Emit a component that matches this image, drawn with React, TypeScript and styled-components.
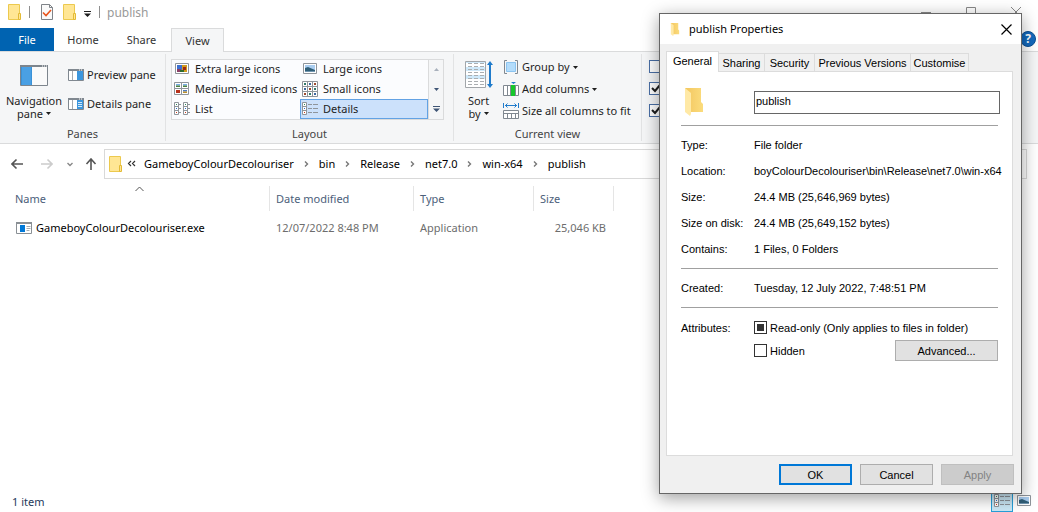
import React from "react";
import styled, { createGlobalStyle } from "styled-components";

const GlobalStyle = createGlobalStyle`
  *, *::before, *::after { box-sizing: border-box; }
  html, body { margin: 0; padding: 0; background: #fff; overflow: hidden; }
  body, button, input, table {
    font-family: "Segoe UI", "Noto Sans", sans-serif;
    font-size: 11px;
    line-height: 16px;
    color: #1e1e1e;
  }
  button { border: 0; padding: 0; margin: 0; background: none; }
  a { color: inherit; text-decoration: none; }
`;

const Explorer = styled.div`
  position: relative;
  display: flex;
  flex-direction: column;
  min-height: 100vh;
  background: #fff;
`;

const TitleBar = styled.header`
  display: flex;
  align-items: flex-start;
  height: 28px;
  padding: 4px 17px 0 8px;
`;

const QuickAccess = styled.div`
  display: flex;
  align-items: flex-start;
  flex: 1;
`;

const QuickButton = styled.button<{ $space: number }>`
  display: block;
  margin-right: ${(p) => p.$space}px;
  svg { display: block; }
`;

const QuickDivider = styled.span<{ $space: number }>`
  width: 1px;
  height: 12px;
  margin: 2px ${(p) => p.$space}px 0 0;
  background: #8f8f8f;
`;

const WindowTitle = styled.span`
  line-height: 18px;
  font-size: 12px;
  color: #999;
`;

const WindowButtons = styled.div`
  display: flex;
  gap: 35px;
  padding-top: 3px;
  svg { display: block; }
`;

const TabStrip = styled.nav`
  display: flex;
  align-items: flex-end;
  height: 24px;
  border-bottom: 1px solid #dadbdc;
`;

const RibbonTab = styled.button<{ $kind?: "file" | "active"; $width: number }>`
  width: ${(p) => p.$width}px;
  height: ${(p) => (p.$kind === "active" ? 24 : 23)}px;
  margin-bottom: ${(p) => (p.$kind === "active" ? -1 : 0)}px;
  color: ${(p) => (p.$kind === "file" ? "#fff" : "#333")};
  background: ${(p) => (p.$kind === "file" ? "#0063b1" : p.$kind === "active" ? "#f5f6f7" : "transparent")};
  border: ${(p) => (p.$kind === "active" ? "1px solid #dadbdc" : "0")};
  border-bottom: 0;
`;

const HelpButton = styled.button`
  width: 16px;
  height: 16px;
  margin: 0 2px 4px auto;
  border-radius: 50%;
  border: 1px solid #0a4f94;
  background: #1469bd;
  color: #fff;
  font-size: 12px;
  font-weight: 700;
  line-height: 14px;
`;

const Ribbon = styled.section`
  display: flex;
  height: 92px;
  padding: 2px 0;
  background: #f5f6f7;
  border-bottom: 1px solid #dadbdc;
`;

const Group = styled.div<{ $width: number }>`
  display: flex;
  flex-direction: column;
  justify-content: space-between;
  width: ${(p) => p.$width}px;
  height: 87px;
  flex: none;
  border-right: 1px solid #e2e3e4;
`;

const GroupBody = styled.div`
  display: flex;
  flex: 1;
`;

const GroupLabel = styled.div`
  height: 16px;
  line-height: 18px;
  text-align: center;
  color: #444;
`;

const LargeButton = styled.button<{ $width: number }>`
  display: flex;
  flex-direction: column;
  align-items: center;
  width: ${(p) => p.$width}px;
  padding-top: 7px;
  svg { display: block; flex: none; }
`;

const LargeIcon = styled.span`
  display: flex;
  align-items: center;
  height: 33px;
  padding-bottom: 5px;
`;

const LargeText = styled.span`
  display: flex;
  align-items: center;
  gap: 3px;
  height: 13px;
  line-height: 13px;
`;

const Stack = styled.div<{ $gap: number; $top: number }>`
  display: flex;
  flex-direction: column;
  gap: ${(p) => p.$gap}px;
  padding-top: ${(p) => p.$top}px;
`;

const SmallButton = styled.button`
  display: flex;
  align-items: center;
  gap: 3px;
  height: 16px;
  white-space: nowrap;
  svg { flex: none; }
`;

const Gallery = styled.div`
  display: flex;
  width: 273px;
  height: 61px;
  margin: 5px 0 0 5px;
  border: 1px solid #dadbdc;
  background: #fbfcfe;
`;

const GalleryGrid = styled.div`
  display: grid;
  grid-template-columns: 128px 128px;
  grid-template-rows: 20px 20px 20px;
  flex: 1;
  margin-top: -1px;
`;

const GalleryItem = styled.button<{ $selected?: boolean }>`
  display: flex;
  align-items: center;
  gap: 5px;
  padding: 0 0 0 1px;
  white-space: nowrap;
  border: 1px solid ${(p) => (p.$selected ? "#62a2e4" : "transparent")};
  background: ${(p) => (p.$selected ? "#cce1fb" : "transparent")};
  svg { flex: none; }
`;

const GalleryScroll = styled.div`
  display: grid;
  grid-template-rows: 20px 20px 20px;
  width: 15px;
  border-left: 1px solid #dadbdc;
  background: #f5f6f7;
`;

const ScrollButton = styled.button`
  display: grid;
  place-items: center;
  padding-bottom: 2px;
`;

const ShowOptions = styled.div`
  display: flex;
  flex-direction: column;
  gap: 9px;
  padding: 6px 0 0 7px;
`;

const RibbonCheck = styled.input`
  appearance: none;
  display: block;
  width: 13px;
  height: 13px;
  margin: 0;
  border: 1px solid #4a6fa5;
  background: #fff;
  &:checked {
    background: #fff url("data:image/svg+xml,%3Csvg xmlns='http://www.w3.org/2000/svg' viewBox='0 0 11 11'%3E%3Cpath d='M2 5l3 3 5-6' fill='none' stroke='%231e1e1e' stroke-width='2'/%3E%3C/svg%3E");
  }
`;

const AddressRow = styled.nav`
  display: flex;
  align-items: center;
  height: 42px;
  padding: 0 11px 2px 11px;
`;

const NavButton = styled.button<{ $space: number }>`
  margin-right: ${(p) => p.$space}px;
  svg { display: block; }
`;

const AddressBox = styled.div`
  display: flex;
  align-items: center;
  flex: 1;
  height: 30px;
  padding-left: 4px;
  border: 1px solid #d9d9d9;
  color: #000;
  white-space: nowrap;
`;

const Crumbs = styled.div`
  display: flex;
  align-items: center;
  gap: 10px;
`;

const FileArea = styled.main`
  flex: 1;
`;

const FileTable = styled.table`
  table-layout: fixed;
  width: 614px;
  border-collapse: separate;
  border-spacing: 0;
`;

const HeadCell = styled.th<{ $width: number; $first?: boolean }>`
  width: ${(p) => p.$width}px;
  height: 25px;
  padding: 0 0 0 ${(p) => (p.$first ? 15 : 6)}px;
  border-right: 1px solid #e5e5e5;
  text-align: left;
  font-weight: 400;
  color: #4c607a;
`;

const HeadInner = styled.div`
  position: relative;
`;

const SortMark = styled.svg`
  position: absolute;
  left: 120px;
  top: -5px;
`;

const Cell = styled.td<{ $first?: boolean; $right?: boolean }>`
  height: 34px;
  padding: 0 ${(p) => (p.$right ? 8 : 0)}px 0 ${(p) => (p.$first ? 16 : 6)}px;
  text-align: ${(p) => (p.$right ? "right" : "left")};
  color: ${(p) => (p.$first ? "#000" : "#6d6d6d")};
  white-space: nowrap;
`;

const FileName = styled.span`
  display: flex;
  align-items: center;
  gap: 4px;
`;

const StatusBar = styled.footer`
  display: flex;
  align-items: center;
  height: 22px;
  padding: 0 3px 0 12px;
  color: #1e395b;
`;

const StatusCount = styled.span`
  flex: 1;
  padding-top: 2px;
`;

const ViewToggle = styled.button<{ $active?: boolean }>`
  display: grid;
  place-items: center;
  width: 22px;
  height: 22px;
  border: ${(p) => (p.$active ? "1px solid #26a0da" : "0")};
  background: ${(p) => (p.$active ? "#cbe8f6" : "transparent")};
`;

const Dialog = styled.section`
  position: absolute;
  top: 13px;
  right: 16px;
  width: 363px;
  padding-bottom: 8px;
  border: 1px solid #666;
  background: #f0f0f0;
  box-shadow: 0 4px 16px rgba(0, 0, 0, 0.38);
  &, & button, & input {
    font-family: "Liberation Sans", sans-serif;
    font-size: 11px;
    color: #000;
  }
`;

const DialogTitle = styled.div`
  display: flex;
  align-items: center;
  height: 30px;
  padding: 0 9px 0 10px;
  background: #fff;
  svg { display: block; }
`;

const DialogName = styled.h2`
  flex: 1;
  margin: 0 0 0 9px;
  font-family: "Segoe UI", "Noto Sans", sans-serif;
  font-size: 11px;
  font-weight: 400;
`;

const DialogTabs = styled.div`
  display: flex;
  align-items: flex-end;
  height: 27px;
  padding-left: 6px;
`;

const DialogTab = styled.button<{ $active?: boolean; $width: number }>`
  position: relative;
  width: ${(p) => p.$width}px;
  height: ${(p) => (p.$active ? 21 : 18)}px;
  margin-bottom: ${(p) => (p.$active ? -1 : 0)}px;
  padding-bottom: ${(p) => (p.$active ? 2 : 0)}px;
  border: 1px solid #dcdcdc;
  border-bottom: 0;
  border-left-width: ${(p) => (p.$active ? 1 : 0)}px;
  background: ${(p) => (p.$active ? "#fff" : "#f0f0f0")};
`;

const Panel = styled.div`
  height: 385px;
  margin: 0 8px 0 6px;
  padding: 16px 14px 0 14px;
  border: 1px solid #dcdcdc;
  background: #fff;
`;

const NameRow = styled.div`
  display: flex;
  height: 37px;
  padding-left: 4px;
`;

const NameInput = styled.input`
  flex: 1;
  height: 23px;
  margin: 3px -2px 0 51px;
  padding: 0 1px 3px 1px;
  border: 1px solid #666;
  outline: 0;
`;

const Rule = styled.hr`
  height: 1px;
  margin: 0;
  border: 0;
  background: #a0a0a0;
`;

const Details = styled.dl`
  display: grid;
  grid-template-columns: 73px 1fr;
  grid-auto-rows: 26px;
  align-items: center;
  margin: 0;
  padding: 6px 0;
  white-space: nowrap;
  dt, dd { margin: 0; }
`;

const Attributes = styled.fieldset`
  display: grid;
  grid-template-columns: 73px 1fr auto;
  grid-auto-rows: 23px;
  align-items: center;
  margin: 0;
  padding: 8px 0 0 0;
  border: 0;
`;

const WideCheck = styled.div`
  grid-column: 2 / 4;
`;

const CheckLabel = styled.label`
  display: flex;
  align-items: center;
  gap: 3px;
  white-space: nowrap;
`;

const DialogCheck = styled.input`
  appearance: none;
  width: 13px;
  height: 13px;
  margin: 0;
  border: 1px solid #333;
  background: #fff;
  &:checked { background: #333; box-shadow: inset 0 0 0 2px #fff; }
`;

const DialogButton = styled.button<{ $wide?: boolean; $kind?: "default" | "disabled" }>`
  display: block;
  width: ${(p) => (p.$wide ? 103 : 73)}px;
  height: 21px;
  border: ${(p) => (p.$kind === "default" ? "2px solid #0078d7" : p.$kind === "disabled" ? "1px solid #bfbfbf" : "1px solid #adadad")};
  background: ${(p) => (p.$kind === "disabled" ? "#ccc" : "#e1e1e1")};
  && { color: ${(p) => (p.$kind === "disabled" ? "#838383" : "#000")}; }
`;

const Advanced = styled.div`
  grid-column: 3;
`;

const DialogActions = styled.div`
  display: flex;
  justify-content: flex-end;
  gap: 8px;
  padding: 8px 7px 0 0;
`;

const FolderIcon = () => (
  <svg width="14" height="17" viewBox="0 0 14 17" aria-hidden="true">
    <path d="M.5.5h11v15H.5z" fill="#ffe694" stroke="#ecc94e" />
    <path d="M10.500 9.500h2v6h-2z" fill="#ffe694" stroke="#e3ba35" />
  </svg>
);

const OpenFolder = ({ w, h }: { w: number; h: number }) => (
  <svg width={w} height={h} viewBox="0 0 18 28" aria-hidden="true">
    <defs>
      <linearGradient id="folderBack" x1="0" x2="1">
        <stop offset="0" stopColor="#f3c65f" />
        <stop offset="1" stopColor="#fbdc7d" />
      </linearGradient>
    </defs>
    <path d="M0 0h16v14l2 2v8H5z" fill="url(#folderBack)" />
    <path d="M0 0l6 5v21l-1 2-5-4z" fill="#ffe9a6" />
  </svg>
);

const CheckedPage = () => (
  <svg width="12" height="16" viewBox="0 0 12 16" aria-hidden="true">
    <path d="M.5.5h8l3 3v12H.5z" fill="#fafafa" stroke="#7f8388" />
    <path d="M8.500.5v3h3" fill="none" stroke="#7f8388" />
    <path d="M2 8.500l3 3 5-5.500" fill="none" stroke="#e8541c" strokeWidth="1.600" />
  </svg>
);

const Caret = ({ color = "#1e1e1e" }: { color?: string }) => (
  <svg width="5" height="3" viewBox="0 0 5 3" aria-hidden="true">
    <path d="M0 0h5L2.500 3z" fill={color} />
  </svg>
);

const Customize = ({ color = "#1e1e1e" }: { color?: string }) => (
  <svg width="7" height="6" viewBox="0 0 7 6" aria-hidden="true">
    <path d="M0 0h7v1H0zM0 2.500h7L3.500 6z" fill={color} />
  </svg>
);

const PaneWindow = ({ kind }: { kind: "preview" | "details" }) => (
  <svg width="16" height="12" viewBox="0 0 16 12" aria-hidden="true">
    <path d="M.5.5h15v11H.5z" fill="#fff" stroke="#808890" />
    <path d="M0 0h16v2H0z" fill="#808890" />
    <path d="M11 .5h1v1h-1zM13 .5h1v1h-1z" fill="#fff" />
    <path d="M4.500 2v9" stroke="#a5abb1" />
    <path d="M9 2h6v9H9z" fill="#3c96dd" />
    {kind === "details" && <path d="M10 4.500h4M10 6.500h4M10 8.500h4" stroke="#d5eaf9" />}
  </svg>
);

const NavPane = () => (
  <svg width="28" height="21" viewBox="0 0 28 21" aria-hidden="true">
    <path d="M.5.5h27v20H.5z" fill="#fafafa" stroke="#7d858d" />
    <path d="M0 0h28v2H0z" fill="#7d858d" />
    <path d="M22 .5h1v1h-1zM24 .5h1v1h-1zM26 .5h1v1h-1z" fill="#fff" />
    <path d="M1 2h11v18H1z" fill="#4aa0e4" />
    <path d="M1.500 2v18M11.500 2v18" stroke="#3a92d8" />
  </svg>
);

const Picture = ({ flowers }: { flowers?: boolean }) => (
  <svg width="16" height="16" viewBox="0 0 16 16" aria-hidden="true">
    <path d="M1.500 2.500h13v10h-13z" fill="#fff" stroke="#8f959b" />
    {flowers ? (
      <>
        <path d="M3 4h10v7H3z" fill="#3c6fd0" />
        <path d="M3 8h4v3H3z" fill="#8a3f66" />
        <path d="M8 4h5v7H8z" fill="#d19a1d" />
        <path d="M9 6h3v3H9z" fill="#9c2a16" />
        <path d="M6 9h4v2H6z" fill="#2f6b2f" />
      </>
    ) : (
      <>
        <path d="M3 4h10v7H3z" fill="#a9cdf0" />
        <path d="M3 7l3-1 7 3v2H3z" fill="#305f78" />
        <path d="M3 10h10v1H3z" fill="#7196b0" />
      </>
    )}
  </svg>
);

const MediumIcons = () => (
  <svg width="16" height="16" viewBox="0 0 16 16" aria-hidden="true">
    <path d="M.5 1.500h7v6h-7zM7.500 1.500h7v6h-7zM.5 7.500h7v6h-7zM7.500 7.500h7v6h-7z" fill="#fff" stroke="#8f959b" />
    <path d="M2 3h4v1.500H2zM9 3h4v1.500H9z" fill="#78aee6" />
    <path d="M2 4.500h4V6H2zM9 4.500h4V6H9z" fill="#4c8240" />
    <path d="M2 9h4v3H2z" fill="#b8331d" />
    <path d="M9 9h4v1.500H9z" fill="#4d7bc0" />
    <path d="M9 10.500h4V12H9z" fill="#bb902d" />
  </svg>
);

const SmallIcons = () => (
  <svg width="16" height="16" viewBox="0 0 16 16" aria-hidden="true">
    <path d="M.5.5h15v15H.5zM5.500.5v15M10.500.5v15M.5 5.500h15M.5 10.500h15" fill="#fff" stroke="#8f959b" />
    <path d="M2 2h2v2H2zM12 7h2v2h-2zM7 12h2v2H7z" fill="#327a6b" />
    <path d="M7 2h2v2H7zM2 7h2v2H2zM12 12h2v2h-2z" fill="#3c68a0" />
    <path d="M12 2h2v2h-2zM7 7h2v2H7zM2 12h2v2H2z" fill="#9c4a2f" />
  </svg>
);

const ListIcon = ({ details }: { details?: boolean }) => (
  <svg width="16" height="16" viewBox="0 0 16 16" aria-hidden="true">
    <path d="M.5 1.500h4v12h-4zM.5 5.500h4M.5 9.500h4" fill="#fff" stroke="#8f959b" />
    {!details && <path d="M9.500 1.500h4v12h-4zM9.500 5.500h4M9.500 9.500h4" fill="#fff" stroke="#8f959b" />}
    <path d="M2 3h1v1H2z" fill="#2f8a5c" />
    <path d="M2 7h1v1H2z" fill="#2b6fd0" />
    <path d="M2 11h1v1H2z" fill="#d03a1a" />
    {details ? (
      <path d="M6 3.500h4M11 3.500h5M6 7.500h4M11 7.500h5M6 11.500h4M11 11.500h5" stroke="#8f959b" />
    ) : (
      <>
        <path d="M5 3.500h2M5 7.500h2M5 11.500h2M14 3.500h2M14 7.500h2M14 11.500h2" stroke="#8f959b" />
        <path d="M11 3h1v1h-1z" fill="#2f8a5c" />
        <path d="M11 7h1v1h-1z" fill="#2b6fd0" />
        <path d="M11 11h1v1h-1z" fill="#d03a1a" />
      </>
    )}
  </svg>
);

const SortIcon = () => (
  <svg width="28" height="28" viewBox="0 0 28 28" aria-hidden="true">
    <path d="M.5.5h20v26H.5z" fill="#fff" stroke="#a2a6aa" />
    <path d="M1 6h19v4H1zM1 14h19v4H1zM1 1h19v1H1z" fill="#cfe9fa" />
    <path d="M3 2.500h16M3 5.500h16M3 8.500h16M3 11.500h16M3 14.500h16M3 17.500h16M3 20.500h16M3 23.500h16" stroke="#aaaeb1" strokeDasharray="4 2" />
    <path d="M25 3v21" stroke="#1f7bcb" strokeWidth="2" />
    <path d="M22 4l3-4 3 4zM22 23l3 4 3-4z" fill="#1f7bcb" />
  </svg>
);

const GroupByIcon = () => (
  <svg width="16" height="16" viewBox="0 0 16 16" aria-hidden="true">
    <path d="M4 1.500H1.500v13H4M12 1.500h2.500v13H12" fill="none" stroke="#808890" />
    <path d="M3.500 3.500h9v9h-9z" fill="#b3dcfb" stroke="#8cc4f0" />
  </svg>
);

const AddColumnsIcon = () => (
  <svg width="16" height="16" viewBox="0 0 16 16" aria-hidden="true">
    <path d="M.5 4.500h15v10H.5zM4.500 4.500v10M7.500 4.500v10M12.500 4.500v10" fill="#fff" stroke="#808890" />
    <path d="M8 4h4v11H8z" fill="#16c62b" />
    <path d="M8 1h5l-2.500 2z" fill="#1f7bcb" />
  </svg>
);

const SizeColumnsIcon = () => (
  <svg width="16" height="16" viewBox="0 0 16 16" aria-hidden="true">
    <path d="M.5 0v5M15.500 0v5M2 2.500h12M4.500.5l-2 2 2 2M11.500.5l2 2-2 2" fill="none" stroke="#1f7bcb" />
    <path d="M.5 7.500h15v8H.5zM.5 10.500h15M4.500 10v5M8.500 10v5M12.500 10v5" fill="#fff" stroke="#808890" />
  </svg>
);

const AppIcon = () => (
  <svg width="16" height="12" viewBox="0 0 16 12" aria-hidden="true">
    <path d="M.5.5h15v11H.5z" fill="#fff" stroke="#8a9095" />
    <path d="M0 0h16v2H0z" fill="#8a9095" />
    <path d="M4 3h5v7H4z" fill="#0078d7" />
    <path d="M10.500 4.500h4M10.500 6.500h4M10.500 8.500h3" stroke="#a5abb1" />
  </svg>
);

const Arrow = ({ dir, color }: { dir: "left" | "right" | "up"; color: string }) => (
  <svg width="12" height="12" viewBox="0 0 12 12" aria-hidden="true" fill="none" stroke={color} strokeWidth="1.600">
    {dir === "left" && <path d="M12 6H1M5.500 1.500L1 6l4.500 4.500" />}
    {dir === "right" && <path d="M0 6h11M6.500 1.500L11 6l-4.500 4.500" />}
    {dir === "up" && <path d="M6 12V1M1.500 6L6 1l4.500 5" />}
  </svg>
);

const Chevron = () => (
  <svg width="5" height="6" viewBox="0 0 5 6" aria-hidden="true">
    <path d="M1 .5L3.500 3 1 5.500" fill="none" stroke="#777" strokeWidth="1.400" />
  </svg>
);

const crumbs = ["GameboyColourDecolouriser", "bin", "Release", "net7.0", "win-x64", "publish"];

const facts = [
  ["Type:", "File folder"],
  ["Location:", "boyColourDecolouriser\\bin\\Release\\net7.0\\win-x64"],
  ["Size:", "24.4 MB (25,646,969 bytes)"],
  ["Size on disk:", "24.4 MB (25,649,152 bytes)"],
  ["Contains:", "1 Files, 0 Folders"],
];

export default function App() {
  return (
    <Explorer>
      <GlobalStyle />
      <TitleBar>
        <QuickAccess>
          <QuickButton $space={7} aria-label="Folder"><FolderIcon /></QuickButton>
          <QuickDivider $space={11} />
          <QuickButton $space={10} aria-label="Properties"><CheckedPage /></QuickButton>
          <QuickButton $space={7} aria-label="New folder"><FolderIcon /></QuickButton>
          <QuickButton $space={8} aria-label="Customise toolbar">
            <svg width="7" height="13" viewBox="0 0 7 13"><path d="M0 7h7v1H0zM0 9.500h7L3.500 13z" fill="#1e1e1e" /></svg>
          </QuickButton>
          <QuickDivider $space={7} />
          <WindowTitle>publish</WindowTitle>
        </QuickAccess>
        <WindowButtons>
          <button aria-label="Minimise"><svg width="10" height="10"><path d="M0 5.500h10" stroke="#888" /></svg></button>
          <button aria-label="Maximise"><svg width="10" height="10"><path d="M.5.5h9v9h-9z" fill="none" stroke="#888" /></svg></button>
          <button aria-label="Close"><svg width="10" height="10"><path d="M0 0l10 10M10 0L0 10" stroke="#888" /></svg></button>
        </WindowButtons>
      </TitleBar>
      <TabStrip>
        <RibbonTab $kind="file" $width={54}>File</RibbonTab>
        <RibbonTab $width={58}>Home</RibbonTab>
        <RibbonTab $width={59}>Share</RibbonTab>
        <RibbonTab $kind="active" $width={53}>View</RibbonTab>
        <HelpButton aria-label="Help">?</HelpButton>
      </TabStrip>
      <Ribbon>
        <Group $width={166}>
          <GroupBody>
            <LargeButton $width={68}>
              <LargeIcon><NavPane /></LargeIcon>
              <LargeText>Navigation</LargeText>
              <LargeText>pane <Caret /></LargeText>
            </LargeButton>
            <Stack $gap={13} $top={13}>
              <SmallButton><PaneWindow kind="preview" />Preview pane</SmallButton>
              <SmallButton><PaneWindow kind="details" />Details pane</SmallButton>
            </Stack>
          </GroupBody>
          <GroupLabel>Panes</GroupLabel>
        </Group>
        <Group $width={288}>
          <GroupBody>
            <Gallery>
              <GalleryGrid>
                <GalleryItem><Picture flowers />Extra large icons</GalleryItem>
                <GalleryItem><Picture />Large icons</GalleryItem>
                <GalleryItem><MediumIcons />Medium-sized icons</GalleryItem>
                <GalleryItem><SmallIcons />Small icons</GalleryItem>
                <GalleryItem><ListIcon />List</GalleryItem>
                <GalleryItem $selected><ListIcon details />Details</GalleryItem>
              </GalleryGrid>
              <GalleryScroll>
                <ScrollButton aria-label="Scroll up">
                  <svg width="5" height="3"><path d="M0 3h5L2.500 0z" fill="#a9b1bc" /></svg>
                </ScrollButton>
                <ScrollButton aria-label="Scroll down"><Caret color="#3f5575" /></ScrollButton>
                <ScrollButton aria-label="More layouts"><Customize color="#3f5575" /></ScrollButton>
              </GalleryScroll>
            </Gallery>
          </GroupBody>
          <GroupLabel>Layout</GroupLabel>
        </Group>
        <Group $width={188}>
          <GroupBody>
            <LargeButton $width={49}>
              <LargeIcon><SortIcon /></LargeIcon>
              <LargeText>Sort</LargeText>
              <LargeText>by <Caret /></LargeText>
            </LargeButton>
            <Stack $gap={6} $top={5}>
              <SmallButton><GroupByIcon />Group by <Caret /></SmallButton>
              <SmallButton><AddColumnsIcon />Add columns <Caret /></SmallButton>
              <SmallButton><SizeColumnsIcon />Size all columns to fit</SmallButton>
            </Stack>
          </GroupBody>
          <GroupLabel>Current view</GroupLabel>
        </Group>
        <ShowOptions>
          <RibbonCheck type="checkbox" aria-label="Item check boxes" />
          <RibbonCheck type="checkbox" defaultChecked aria-label="File name extensions" />
          <RibbonCheck type="checkbox" defaultChecked aria-label="Hidden items" />
        </ShowOptions>
      </Ribbon>
      <AddressRow>
        <NavButton $space={18} aria-label="Back"><Arrow dir="left" color="#555" /></NavButton>
        <NavButton $space={14} aria-label="Forward"><Arrow dir="right" color="#ccc" /></NavButton>
        <NavButton $space={12} aria-label="Recent locations">
          <svg width="6" height="5"><path d="M.5 1L3 3.500 5.500 1" fill="none" stroke="#888" strokeWidth="1.400" /></svg>
        </NavButton>
        <NavButton $space={7} aria-label="Up"><Arrow dir="up" color="#555" /></NavButton>
        <AddressBox>
          <FolderIcon />
          <svg width="21" height="8" viewBox="0 0 21 8" aria-hidden="true">
            <path d="M8 1L5.500 3.500 8 6M12 1L9.500 3.500 12 6" fill="none" stroke="#333" strokeWidth="1.200" />
          </svg>
          <Crumbs>
            {crumbs.map((c, i) => (
              <React.Fragment key={c}>
                {i > 0 && <Chevron />}
                <a href="#">{c}</a>
              </React.Fragment>
            ))}
          </Crumbs>
        </AddressBox>
      </AddressRow>
      <FileArea>
        <FileTable>
          <thead>
            <tr>
              <HeadCell $width={270} $first>
                <HeadInner>
                  Name
                  <SortMark width="9" height="6" aria-hidden="true">
                    <path d="M.5 5L4.500 1l4 4" fill="none" stroke="#555" />
                  </SortMark>
                </HeadInner>
              </HeadCell>
              <HeadCell $width={144}>Date modified</HeadCell>
              <HeadCell $width={120}>Type</HeadCell>
              <HeadCell $width={80}>Size</HeadCell>
            </tr>
          </thead>
          <tbody>
            <tr>
              <Cell $first><FileName><AppIcon />GameboyColourDecolouriser.exe</FileName></Cell>
              <Cell>12/07/2022 8:48 PM</Cell>
              <Cell>Application</Cell>
              <Cell $right>25,046 KB</Cell>
            </tr>
          </tbody>
        </FileTable>
      </FileArea>
      <StatusBar>
        <StatusCount>1 item</StatusCount>
        <ViewToggle $active aria-label="Details view"><ListIcon details /></ViewToggle>
        <ViewToggle aria-label="Thumbnail view"><Picture /></ViewToggle>
      </StatusBar>

      <Dialog role="dialog" aria-labelledby="dialog-title">
        <DialogTitle>
          <OpenFolder w={10} h={13} />
          <DialogName id="dialog-title">publish Properties</DialogName>
          <button aria-label="Close dialog"><svg width="11" height="11"><path d="M.5.5l10 10M10.500.5l-10 10" stroke="#000" strokeWidth="1.200" /></svg></button>
        </DialogTitle>
        <DialogTabs>
          <DialogTab $active $width={53}>General</DialogTab>
          <DialogTab $width={46}>Sharing</DialogTab>
          <DialogTab $width={50}>Security</DialogTab>
          <DialogTab $width={96}>Previous Versions</DialogTab>
          <DialogTab $width={58}>Customise</DialogTab>
        </DialogTabs>
        <Panel>
          <NameRow>
            <OpenFolder w={18} h={28} />
            <NameInput aria-label="Folder name" defaultValue="publish" />
          </NameRow>
          <Rule />
          <Details>
            {facts.map(([k, v]) => (
              <React.Fragment key={k}>
                <dt>{k}</dt>
                <dd>{v}</dd>
              </React.Fragment>
            ))}
          </Details>
          <Rule />
          <Details>
            <dt>Created:</dt>
            <dd>Tuesday, 12 July 2022, 7:48:51 PM</dd>
          </Details>
          <Rule />
          <Attributes>
            <span>Attributes:</span>
            <WideCheck>
              <CheckLabel><DialogCheck type="checkbox" defaultChecked />Read-only (Only applies to files in folder)</CheckLabel>
            </WideCheck>
            <span />
            <CheckLabel><DialogCheck type="checkbox" />Hidden</CheckLabel>
            <Advanced><DialogButton $wide>Advanced...</DialogButton></Advanced>
          </Attributes>
        </Panel>
        <DialogActions>
          <DialogButton $kind="default">OK</DialogButton>
          <DialogButton>Cancel</DialogButton>
          <DialogButton $kind="disabled" disabled>Apply</DialogButton>
        </DialogActions>
      </Dialog>
    </Explorer>
  );
}
